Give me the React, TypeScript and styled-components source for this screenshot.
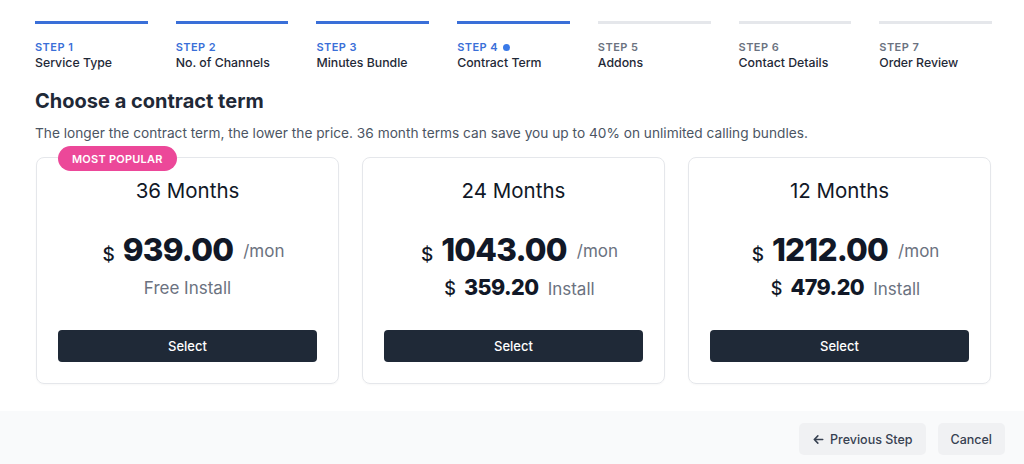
import React from "react";
import styled, { createGlobalStyle } from "styled-components";

const Global = createGlobalStyle`
  html, body { margin: 0; padding: 0; background: #ffffff; }
  body { font-family: Inter, "Noto Sans", "Liberation Sans", sans-serif; color: #111827; -webkit-font-smoothing: antialiased; }
  * { box-sizing: border-box; }
`;

const Page = styled.div`
  width: 1024px;
  height: 464px;
  display: flex;
  flex-direction: column;
  background: #ffffff;
  overflow: hidden;
`;

const Main = styled.div`
  flex: 1;
  padding: 21px 32px 0 35px;
  display: flex;
  flex-direction: column;
`;

const Stepper = styled.ol`
  list-style: none;
  margin: 0;
  padding: 0;
  display: grid;
  grid-template-columns: repeat(7, 1fr);
  column-gap: 28px;
`;

const Step = styled.li<{ $done: boolean }>`
  border-top: 3px solid ${(p) => (p.$done ? "#3a6fd8" : "#e5e7eb")};
  padding-top: 16px;
  display: flex;
  flex-direction: column;
`;

const StepLabel = styled.span<{ $done: boolean }>`
  font-size: 11px;
  font-weight: 600;
  letter-spacing: 0.04em;
  line-height: 14px;
  color: ${(p) => (p.$done ? "#3a6fd8" : "#6b7280")};
  display: flex;
  align-items: center;
  gap: 5px;
`;

const Dot = styled.span`
  width: 7px;
  height: 7px;
  border-radius: 50%;
  background: #3a7ae8;
`;

const StepTitle = styled.span`
  font-size: 12.3px;
  font-weight: 500;
  line-height: 17px;
  color: #1f2937;
`;

const Heading = styled.h2`
  margin: 16px 0 0 0;
  font-size: 20px;
  font-weight: 700;
  line-height: 28px;
  color: #1f2937;
`;

const Sub = styled.p`
  margin: 8px 0 0 0;
  font-size: 13.7px;
  line-height: 20px;
  color: #4b5563;
`;

const Cards = styled.div`
  margin: 14px 1px 0 1px;
  display: grid;
  grid-template-columns: repeat(3, 1fr);
  column-gap: 23px;
`;

const Card = styled.div`
  position: relative;
  border: 1px solid #e5e7eb;
  border-radius: 8px;
  padding: 19px 21px 21px;
  display: flex;
  flex-direction: column;
  align-items: center;
  box-shadow: 0 1px 2px rgba(0, 0, 0, 0.03);
`;

const Badge = styled.span`
  position: absolute;
  top: -12px;
  left: 21px;
  height: 25px;
  padding: 0 14px;
  border-radius: 999px;
  background: #ec4899;
  color: #ffffff;
  font-size: 11px;
  font-weight: 600;
  letter-spacing: 0.02em;
  display: flex;
  align-items: center;
`;

const Term = styled.div`
  font-size: 20.5px;
  font-weight: 400;
  line-height: 28px;
  color: #111827;
`;

const PriceRow = styled.div`
  margin-top: 25px;
  padding-left: 12px;
  display: flex;
  align-items: baseline;
  justify-content: center;
  height: 44px;
`;

const Currency = styled.span<{ $size: number }>`
  font-size: ${(p) => p.$size}px;
  font-weight: 500;
  color: #111827;
  margin-right: 8px;
`;

const Amount = styled.span<{ $size: number }>`
  font-size: ${(p) => p.$size}px;
  font-weight: 800;
  letter-spacing: -0.025em;
  color: #111827;
`;

const Unit = styled.span`
  align-self: center;
  font-size: 17px;
  line-height: 20px;
  color: #6b7280;
  margin-left: 10px;
  margin-bottom: 3px;
`;

const InstallRow = styled.div<{ $solo?: boolean }>`
  margin-top: 0;
  padding-left: ${(p) => (p.$solo ? 0 : 12)}px;
  display: flex;
  align-items: baseline;
  justify-content: center;
  height: 32px;
`;

const InstallText = styled.span<{ $solo?: boolean }>`
  font-size: 17px;
  color: #6b7280;
  padding-top: ${(p) => (p.$solo ? 4 : 0)}px;
`;

const InstallSpacer = styled.span`
  width: 9px;
`;

const SelectButton = styled.button`
  margin-top: 24px;
  width: 100%;
  height: 32px;
  border: none;
  border-radius: 4px;
  background: #1f2937;
  color: #ffffff;
  font-family: inherit;
  font-size: 13px;
  font-weight: 500;
`;

const Footer = styled.div`
  height: 53px;
  background: #f9fafb;
  display: flex;
  justify-content: flex-end;
  align-items: center;
  gap: 12px;
  padding: 3px 19px 0 0;
`;

const FooterButton = styled.button`
  height: 32px;
  padding: 0 13px;
  border: none;
  border-radius: 5px;
  background: #f0f1f3;
  color: #374151;
  font-family: inherit;
  font-size: 12.5px;
  font-weight: 500;
  display: flex;
  align-items: center;
  gap: 5px;
`;

const Arrow = () => (
  <svg width="13" height="13" viewBox="0 0 20 20" fill="none" stroke="currentColor" strokeWidth="2.4" strokeLinecap="round" strokeLinejoin="round">
    <path d="M16.5 10H3.5M9 4.5L3.5 10 9 15.5" />
  </svg>
);

const steps = [
  "Service Type",
  "No. of Channels",
  "Minutes Bundle",
  "Contract Term",
  "Addons",
  "Contact Details",
  "Order Review",
];

type Plan = { term: string; price: string; install: string | null; popular?: boolean };

const plans: Plan[] = [
  { term: "36 Months", price: "939.00", install: null, popular: true },
  { term: "24 Months", price: "1043.00", install: "359.20" },
  { term: "12 Months", price: "1212.00", install: "479.20" },
];

export default function App() {
  return (
    <Page>
      <Global />
      <Main>
        <Stepper>
          {steps.map((s, i) => (
            <Step key={s} $done={i < 4}>
              <StepLabel $done={i < 4}>
                STEP {i + 1}
                {i === 3 && <Dot />}
              </StepLabel>
              <StepTitle>{s}</StepTitle>
            </Step>
          ))}
        </Stepper>
        <Heading>Choose a contract term</Heading>
        <Sub>
          The longer the contract term, the lower the price. 36 month terms can save you up to 40% on unlimited calling bundles.
        </Sub>
        <Cards>
          {plans.map((p) => (
            <Card key={p.term}>
              {p.popular && <Badge>MOST POPULAR</Badge>}
              <Term>{p.term}</Term>
              <PriceRow>
                <Currency $size={19}>$</Currency>
                <Amount $size={31.5}>{p.price}</Amount>
                <Unit>/mon</Unit>
              </PriceRow>
              <InstallRow $solo={!p.install}>
                {p.install ? (
                  <>
                    <Currency $size={18}>$</Currency>
                    <Amount $size={21.5}>{p.install}</Amount>
                    <InstallSpacer />
                    <InstallText>Install</InstallText>
                  </>
                ) : (
                  <InstallText $solo>Free Install</InstallText>
                )}
              </InstallRow>
              <SelectButton>Select</SelectButton>
            </Card>
          ))}
        </Cards>
      </Main>
      <Footer>
        <FooterButton>
          <Arrow />
          Previous Step
        </FooterButton>
        <FooterButton>Cancel</FooterButton>
      </Footer>
    </Page>
  );
}
